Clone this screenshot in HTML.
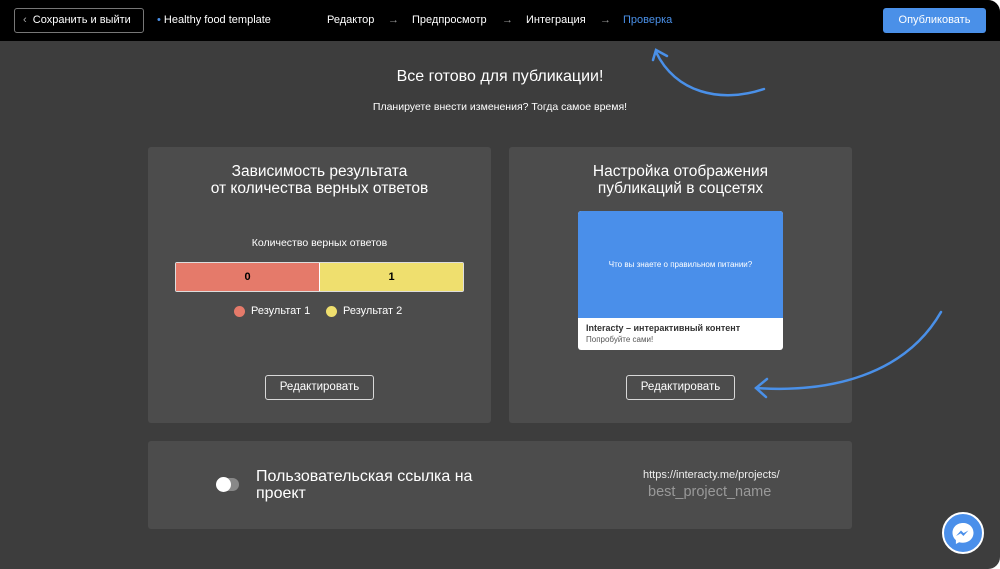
<!DOCTYPE html>
<html><head><meta charset="utf-8"><style>
*{box-sizing:border-box;margin:0;padding:0}
body{width:1000px;height:569px;background:#fff;font-family:"Liberation Sans",sans-serif;overflow:hidden}
#app{position:absolute;left:0;top:0;width:1000px;height:569px;background:#3d3d3d;border-radius:0 12px 12px 0;overflow:hidden}
.hdr{position:absolute;left:0;top:0;width:1000px;height:41px;background:#000;color:#fff;font-size:11px}
.abs{position:absolute}
.card{position:absolute;background:#4c4c4c;border-radius:3px}
.btn{position:absolute;border:1px solid #d8d8d8;border-radius:3px;color:#fff;font-size:11.5px;text-align:center;line-height:23px;height:25px}
.c{text-align:center;color:#fff}
.nav{position:absolute;top:14px}
.ar{color:#999}
</style></head><body><div id="app">
<div class="hdr">
 <div class="abs" style="left:14px;top:8px;width:130px;height:25px;border:1px solid #777;border-radius:3px;line-height:23px;padding-left:8px;white-space:nowrap"><span style="color:#aaa">‹</span>&nbsp; Сохранить и выйти</div>
 <div class="abs" style="left:157px;top:14px"><span style="color:#4a90e8">•</span> Healthy food template</div>
 <div class="nav" style="left:327px">Редактор</div>
 <div class="nav ar" style="left:388px">→</div>
 <div class="nav" style="left:412px">Предпросмотр</div>
 <div class="nav ar" style="left:502px">→</div>
 <div class="nav" style="left:526px">Интеграция</div>
 <div class="nav ar" style="left:600px">→</div>
 <div class="nav" style="left:623px;color:#4a90e8">Проверка</div>
 <div class="abs" style="left:883px;top:8px;width:103px;height:25px;background:#4a90e8;border-radius:3px;text-align:center;line-height:25px">Опубликовать</div>
</div>
<div class="abs c" style="left:0;width:1000px;top:68px;font-size:16px">Все готово для публикации!</div>
<div class="abs c" style="left:0;width:1000px;top:101px;font-size:10.5px">Планируете внести изменения? Тогда самое время!</div>

<div class="card" style="left:148px;top:147px;width:343px;height:276px">
 <div class="abs c" style="left:0;width:343px;top:16px;font-size:15.5px;line-height:17px">Зависимость результата<br>от количества верных ответов</div>
 <div class="abs c" style="left:0;width:343px;top:90px;font-size:10.5px">Количество верных ответов</div>
 <div class="abs" style="left:27px;top:115px;width:289px;height:30px;border:1px solid #ddd;border-radius:2px;display:flex;font-size:11px;font-weight:bold;line-height:28px;text-align:center">
  <div style="flex:1;background:#e57a6a;border-right:1px solid #fff">0</div><div style="flex:1;background:#efdf6e">1</div></div>
 <div class="abs" style="left:86px;top:159px;width:11px;height:11px;border-radius:50%;background:#e57a6a"></div>
 <div class="abs" style="left:103px;top:158px;color:#fff;font-size:11px">Результат 1</div>
 <div class="abs" style="left:178px;top:159px;width:11px;height:11px;border-radius:50%;background:#efdf6e"></div>
 <div class="abs" style="left:195px;top:158px;color:#fff;font-size:11px">Результат 2</div>
 <div class="btn" style="left:117px;top:228px;width:109px">Редактировать</div>
</div>

<div class="card" style="left:509px;top:147px;width:343px;height:276px">
 <div class="abs c" style="left:0;width:343px;top:16px;font-size:15.5px;line-height:17px">Настройка отображения<br>публикаций в соцсетях</div>
 <div class="abs" style="left:69px;top:64px;width:205px;height:139px;background:#fff;border-radius:3px;overflow:hidden">
  <div style="height:107px;background:#4a8fea;color:#fff;font-size:8px;text-align:center;line-height:107px">Что вы знаете о правильном питании?</div>
  <div style="padding:5px 0 0 8px;font-size:9px;font-weight:bold;color:#333">Interacty – интерактивный контент</div>
  <div style="padding:2px 0 0 8px;font-size:8px;color:#555">Попробуйте сами!</div>
 </div>
 <div class="btn" style="left:117px;top:228px;width:109px">Редактировать</div>
</div>

<div class="card" style="left:148px;top:441px;width:704px;height:88px">
 <div class="abs" style="left:70px;top:37px;width:21px;height:13px;border-radius:7px;background:#888"></div>
 <div class="abs" style="left:68px;top:36px;width:15px;height:15px;border-radius:50%;background:#fff"></div>
 <div class="abs" style="left:108px;top:27px;color:#fff;font-size:16px;line-height:17px">Пользовательская ссылка на<br>проект</div>
 <div class="abs" style="left:495px;top:28px;color:#eee;font-size:11px">https://interacty.me/projects/</div>
 <div class="abs" style="left:500px;top:43px;color:#999;font-size:14.5px">best_project_name</div>
</div>

<svg class="abs" style="left:0;top:0" width="1000" height="569" fill="none" stroke="#4a90e8" stroke-width="2.5" stroke-linecap="round">
 <path d="M764 89 C720 104 675 92 656 52"/><path d="M653 60 L656 50 L667 56"/>
 <path d="M941 312 C905 375 830 393 756 388"/><path d="M767 379 L756 388 L766 397"/>
</svg>
<div class="abs" style="left:942px;top:512px;width:42px;height:42px;border-radius:50%;background:#4a8fea;border:2px solid #fff">
 <svg width="38" height="38" viewBox="0 0 38 38"><path d="M19 9c-6 0-10.5 4.2-10.5 9.8 0 3 1.3 5.6 3.4 7.3V30l3.2-1.8c1.2.3 2.5.5 3.9.5 6 0 10.5-4.2 10.5-9.9S25 9 19 9z" fill="#fff"/><path d="M12 22l5-5.5 2.6 2.6 4.8-2.6-5 5.5-2.6-2.6z" fill="#4a8fea"/></svg>
</div>
</div></body></html>
